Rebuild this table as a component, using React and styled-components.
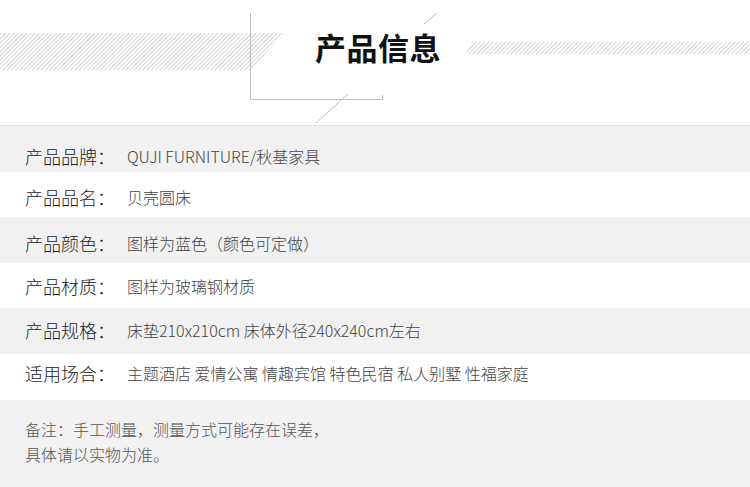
import React from 'react';
import styled, {createGlobalStyle} from 'styled-components';

const GlobalStyle = createGlobalStyle`
    * { box-sizing: border-box; }
    body {
        margin: 0;
        background: #fff;
        font-family: "Noto Sans CJK SC", "Noto Sans", sans-serif;
    }
`;

const specs = [
    {label: '产品品牌：', value: 'QUJI FURNITURE/秋基家具', shade: true, nudge: 7},
    {label: '产品品名：', value: '贝壳圆床', shade: false, nudge: 3},
    {label: '产品颜色：', value: '图样为蓝色（颜色可定做）', shade: true, nudge: 3},
    {label: '产品材质：', value: '图样为玻璃钢材质', shade: false, nudge: 1},
    {label: '产品规格：', value: '床垫210x210cm 床体外径240x240cm左右', shade: true, nudge: -1},
    {label: '适用场合：', value: '主题酒店 爱情公寓 情趣宾馆 特色民宿 私人别墅 性福家庭', shade: false, nudge: -3},
];

const Decor = () => (
    <DecorSvg width="750" height="126" viewBox="0 0 750 126">
        <defs>
            <pattern id="hatch" width="3" height="3" patternUnits="userSpaceOnUse" patternTransform="rotate(45)">
                <line x1="0" y1="0" x2="0" y2="3" stroke="#b4b4b4" strokeWidth="1.2" />
            </pattern>
        </defs>
        <polygon points="0,33 285,33 250,70 0,70" fill="url(#hatch)" />
        <polygon points="472,42 750,42 750,54 465,54" fill="url(#hatch)" />
        <g stroke="#bdbdbd" strokeWidth="1" fill="none">
            <polyline points="250.5,13 250.5,99.5 382.5,99.5 382.5,95" />
            <line x1="348" y1="94" x2="316" y2="123" />
            <line x1="437" y1="13" x2="424" y2="24" />
        </g>
    </DecorSvg>
);

const App = () => {
    return (
        <Page>
            <GlobalStyle />
            <Header>
                <Decor />
                <Title>产品信息</Title>
            </Header>
            <Table>
                {specs.map((s) => (
                    <Row key={s.label} shade={s.shade ? 1 : 0} nudge={s.nudge}>
                        <Label>{s.label}</Label>
                        <Value>{s.value}</Value>
                    </Row>
                ))}
            </Table>
            <Note>
                备注：手工测量，测量方式可能存在误差，<br />
                具体请以实物为准。
            </Note>
        </Page>
    );
}

const Page = styled.div`
    width: 750px;
    height: 487px;
    overflow: hidden;
    background: #fff;
`;

const Header = styled.header`
    position: relative;
    height: 126px;
    display: flex;
    justify-content: center;
    align-items: flex-start;
    padding-top: 24px;
    border-bottom: 1px solid #dedede;
`;

const DecorSvg = styled.svg`
    position: absolute;
    top: 0;
    left: 0;
`;

const Title = styled.h1`
    position: relative;
    margin: 0 0 0 6px;
    font-size: 31px;
    line-height: 46px;
    font-weight: 700;
    color: #111;
    letter-spacing: 0.5px;
`;

const Table = styled.div`
    display: flex;
    flex-direction: column;
`;

const Row = styled.div`
    height: 45.5px;
    display: grid;
    grid-template-columns: 127px 1fr;
    align-items: center;
    padding-top: ${p => Math.max(0, p.nudge * 2)}px;
    padding-bottom: ${p => Math.max(0, -p.nudge * 2)}px;
    background: ${p => p.shade ? '#f1f1f1' : '#fff'};
`;

const Label = styled.span`
    padding-left: 25px;
    font-size: 18px;
    font-weight: 300;
    color: #222;
    white-space: nowrap;
`;

const Value = styled.span`
    font-size: 16px;
    font-weight: 300;
    color: #444;
    white-space: nowrap;
`;

const Note = styled.div`
    margin-top: 1px;
    height: 88px;
    background: #f1f1f1;
    padding: 17px 25px 0;
    font-size: 16px;
    font-weight: 300;
    line-height: 25px;
    color: #555;
`;

export default App;
